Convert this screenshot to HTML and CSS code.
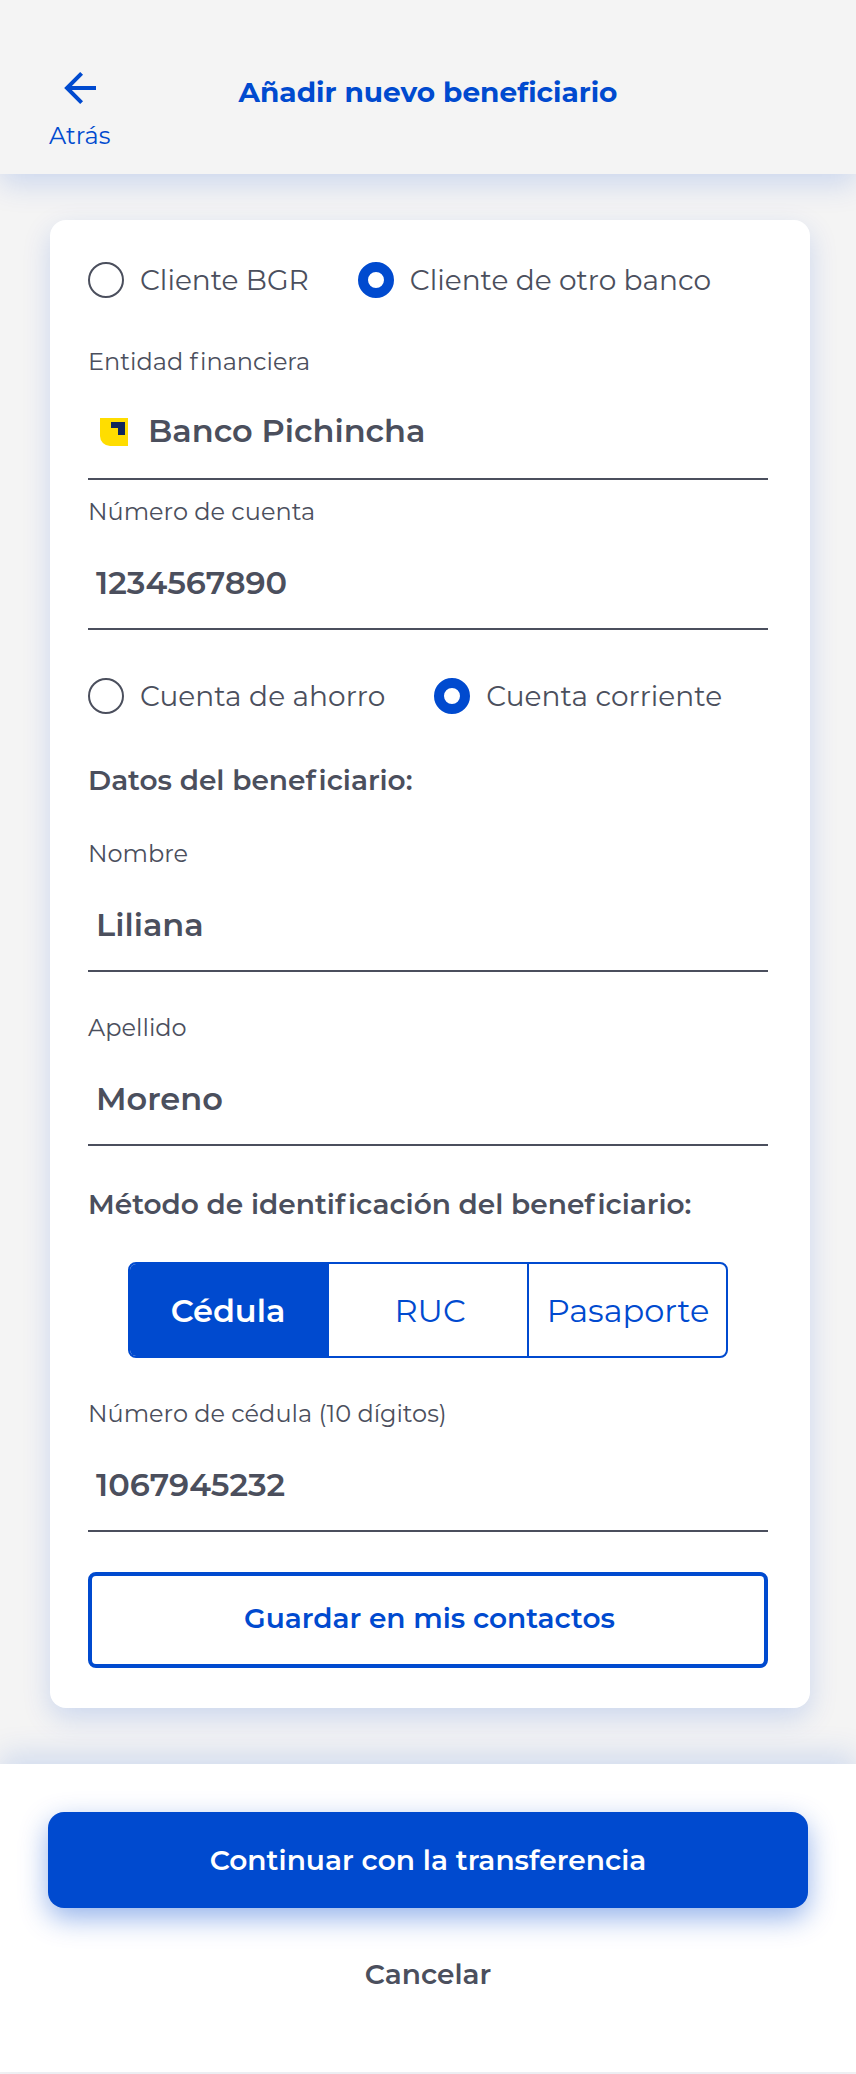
FILE: index.html
```
<!DOCTYPE html>
<html lang="es">
<head>
<meta charset="utf-8">
<title>Añadir nuevo beneficiario</title>
<link rel="stylesheet" href="styles.css">
</head>
<body>
<div class="screen">
  <header class="header">
    <a class="back">
      <svg class="back-icon" width="32" height="32" viewBox="0 0 32 32" fill="none" stroke="currentColor" stroke-width="4"><path d="M17.6 1.4 3 16l14.6 14.6M3 16h29"/></svg>
      <span>Atrás</span>
    </a>
    <h1 class="title">Añadir nuevo beneficiario</h1>
  </header>

  <main class="card">
    <div class="radios">
      <label class="radio"><span class="dot"></span>Cliente BGR</label>
      <label class="radio"><span class="dot dot-on"></span>Cliente de otro banco</label>
    </div>
    <div class="field field-bank">
      <span class="label">Entidad <span class="loose">f</span>inanciera</span>
      <span class="value">
        <svg class="bank-logo" width="28" height="28" viewBox="0 0 28 28"><path fill="#ffdd00" d="M0 0h28v28H10A10 10 0 0 1 0 18z"/><path fill="#0f265c" d="M11 4h14v13h-7v-7h-7z"/></svg>
        Banco Pichincha
      </span>
    </div>
    <div class="field field-account">
      <span class="label">Número de cuenta</span>
      <span class="value">1234567890</span>
    </div>
    <div class="radios radios-account">
      <label class="radio"><span class="dot"></span>Cuenta de ahorro</label>
      <label class="radio"><span class="dot dot-on"></span>Cuenta corriente</label>
    </div>
    <h2 class="heading heading-data">Datos del bene<span class="loose">f</span>iciario:</h2>
    <div class="field field-name">
      <span class="label">Nombre</span>
      <span class="value">Liliana</span>
    </div>
    <div class="field">
      <span class="label">Apellido</span>
      <span class="value">Moreno</span>
    </div>
    <h2 class="heading">Método de identi<span class="loose">f</span>icación del bene<span class="loose">f</span>iciario:</h2>
    <div class="segments">
      <span class="segment segment-on">Cédula</span>
      <span class="segment segment-mid">RUC</span>
      <span class="segment">Pasaporte</span>
    </div>
    <div class="field">
      <span class="label">Número de cédula (10 dígitos)</span>
      <span class="value">1067945232</span>
    </div>
    <button class="button button-outline">Guardar en mis contactos</button>
  </main>

  <footer class="footer">
    <button class="button button-primary">Continuar con la transferencia</button>
    <button class="cancel">Cancelar</button>
  </footer>
</div>
</body>
</html>
```
FILE: styles.css
```
* { box-sizing: border-box; }

body {
  margin: 0;
  background: #f4f4f4;
  color: #4b4f5d;
  font-family: Montserrat, Inter, sans-serif;
  font-size: 28px;
  line-height: 34px;
}

.screen {
  width: 856px;
  height: 2074px;
  overflow: hidden;
  display: flex;
  flex-direction: column;
}

.header {
  height: 174px;
  flex: none;
  display: grid;
  grid-template-columns: 1fr auto 1fr;
  padding: 72px 49px 0;
  background: #f4f4f4;
  color: #004acf;
  box-shadow: 0 10px 28px rgba(0, 74, 207, 0.17);
}

.back {
  justify-self: start;
  display: flex;
  flex-direction: column;
  align-items: center;
  gap: 17px;
  font-size: 24px;
  line-height: 30px;
}

.back-icon { display: block; }

.title {
  margin: 3px 0 0;
  font-size: 28px;
  font-weight: 700;
}

.card {
  width: 760px;
  height: 1488px;
  flex: none;
  margin: 46px 0 0 50px;
  padding: 42px 42px 40px 38px;
  display: flex;
  flex-direction: column;
  background: #fff;
  border-radius: 16px;
  font-variant-ligatures: none;
  box-shadow: 0 10px 28px rgba(0, 74, 207, 0.17);
}

.radios { display: flex; gap: 49px; height: 36px; }
.radios-account { margin-top: 48px; letter-spacing: 0.06px; }

.radio { display: flex; align-items: center; gap: 16px; white-space: nowrap; }

.dot {
  width: 36px;
  height: 36px;
  border: 2px solid #4b4f5d;
  border-radius: 50%;
}

.dot-on { border: 10px solid #004acf; }

.field {
  height: 134px;
  margin-top: 40px;
  padding-top: 1px;
  display: flex;
  flex-direction: column;
  border-bottom: 2px solid #4b4f5d;
}

.field-bank { margin-top: 48px; }
.field-account { margin-top: 16px; }
.field-name { margin-top: 41px; }

.label { font-size: 24px; line-height: 30px; }

/* Opens the gap between "f" and a following "i". */
.loose { letter-spacing: 0.1em; }

.value {
  display: flex;
  align-items: center;
  padding: 36px 0 0 8px;
  font-size: 32px;
  line-height: 40px;
  font-weight: 600;
}

.field-bank .value { padding: 34px 0 0 12px; gap: 20px; }
.bank-logo { margin-top: 2px; }

.heading {
  margin: 41px 0 0;
  font-size: 28px;
  font-weight: 600;
  line-height: 34px;
}

.heading-data { margin-top: 49px; }

.segments {
  width: 600px;
  height: 96px;
  margin: 41px 0 0 40px;
  display: grid;
  grid-template-columns: 199px 200px 197px;
  border: 2px solid #004acf;
  border-radius: 8px;
  overflow: hidden;
  color: #004acf;
  font-size: 32px;
}

.segment {
  display: flex;
  align-items: center;
  justify-content: center;
  padding-top: 2px;
}

.segment + .segment { border-right: 2px solid #004acf; }
.segment:last-child { border-right: 0; padding-left: 1px; }
.segment-mid { padding-left: 4px; }
.segment-on { padding-right: 3px; background: #004acf; color: #fff; font-weight: 600; }

.button {
  height: 96px;
  font: inherit;
  font-weight: 600;
  border-radius: 8px;
}

.button-outline {
  margin-top: 40px;
  padding: 0 0 4px 3px;
  background: #fff;
  border: 4px solid #004acf;
  color: #004acf;
}

.footer {
  height: 308px;
  flex: none;
  margin-top: 56px;
  padding: 48px;
  display: flex;
  flex-direction: column;
  background: #fff;
  box-shadow: 0 -10px 28px rgba(0, 74, 207, 0.145);
}

.button-primary {
  background: #004acf;
  border: 0;
  border-radius: 16px;
  color: #fff;
  letter-spacing: 0.05px;
  box-shadow: 0 10px 28px rgba(0, 74, 207, 0.42);
}

.cancel {
  margin: 49px auto 0;
  padding: 0;
  border: 0;
  background: none;
  color: inherit;
  font: inherit;
  font-weight: 600;
}
```
